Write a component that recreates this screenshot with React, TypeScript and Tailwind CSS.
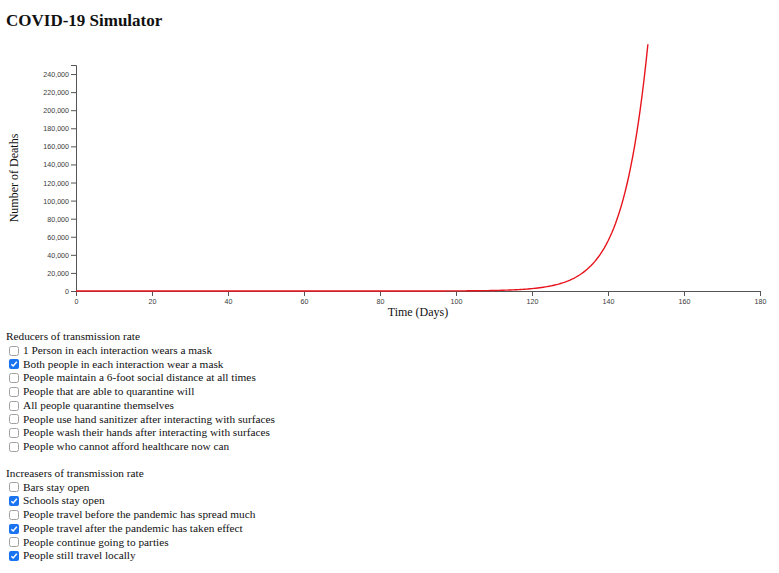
import React from "react";

const serif = { fontFamily: '"Liberation Serif", "Times New Roman", serif' };

// Chart geometry in page pixels (svg starts at page y = 32)
const TOP = 32;
const X0 = 76;
const X1 = 760;
const Y0 = 291 - TOP; // value 0
const Y1 = 65 - TOP; // value 250,000
const xs = (d: number) => X0 + ((X1 - X0) * d) / 180;
const ys = (v: number) => Y0 - ((Y0 - Y1) * v) / 250000;

const deaths = (t: number) => 273000 * Math.exp(0.152 * (t - 150.5));

function Chart() {
  const yTicks = Array.from({ length: 13 }, (_, i) => i * 20000);
  const xTicks = Array.from({ length: 10 }, (_, i) => i * 20);
  const pts: string[] = [];
  for (let t = 0; t <= 150.5; t += 0.5) {
    pts.push(`${xs(t).toFixed(2)},${ys(deaths(t)).toFixed(2)}`);
  }
  return (
    <svg width={779} height={292} className="block">
      {/* y axis */}
      <g fill="#3a3a3a" fontSize={7.1} fontFamily='"Liberation Sans", Arial, sans-serif'>
        <path d={`M${X0 - 5},${Y1 + 0.5}H${X0 + 0.5}V${Y0 + 0.5}H${X0 - 5}`} stroke="#555" fill="none" />
        {yTicks.map((v) => (
          <g key={v}>
            <line x1={X0 - 5} x2={X0} y1={ys(v) + 0.5} y2={ys(v) + 0.5} stroke="#555" />
            <text x={X0 - 7} y={ys(v) + 3} textAnchor="end">
              {v.toLocaleString("en-US")}
            </text>
          </g>
        ))}
      </g>
      {/* x axis */}
      <g fill="#3a3a3a" fontSize={7.1} fontFamily='"Liberation Sans", Arial, sans-serif'>
        <path d={`M${X0 + 0.5},${Y0 + 5}V${Y0 + 0.5}H${X1 + 0.5}V${Y0 + 5}`} stroke="#555" fill="none" />
        {xTicks.map((d) => (
          <g key={d}>
            <line x1={xs(d) + 0.5} x2={xs(d) + 0.5} y1={Y0} y2={Y0 + 5} stroke="#555" />
            <text x={xs(d) + 0.5} y={Y0 + 13} textAnchor="middle">
              {d}
            </text>
          </g>
        ))}
      </g>
      <polyline points={pts.join(" ")} fill="none" stroke="#e8141c" strokeWidth={1.4} />
      <text
        x={418}
        y={312 - TOP + 4}
        textAnchor="middle"
        fontSize={12}
        fill="#111"
        fontFamily='"Liberation Serif", "Times New Roman", serif'
      >
        Time (Days)
      </text>
      <text
        transform={`translate(18, ${178 - TOP}) rotate(-90)`}
        textAnchor="middle"
        fontSize={12}
        fill="#111"
        fontFamily='"Liberation Serif", "Times New Roman", serif'
      >
        Number of Deaths
      </text>
    </svg>
  );
}

function Check({ label, checked }: { label: string; checked?: boolean }) {
  return (
    <label className="flex h-[13.75px] items-center">
      {checked ? (
        <span className="ml-[9px] mr-[4px] flex h-[10px] w-[10px] items-center justify-center rounded-[2px] bg-[#1a73f0]">
          <svg width="8" height="8" viewBox="0 0 8 8">
            <path d="M1.3 4.2 L3.2 6 L6.8 1.8" stroke="#fff" strokeWidth="1.5" fill="none" />
          </svg>
        </span>
      ) : (
        <span className="ml-[9px] mr-[4px] h-[10px] w-[10px] rounded-[2.5px] border border-[#a0a0a0] bg-white" />
      )}
      <span>{label}</span>
    </label>
  );
}

const reducers: [string, boolean][] = [
  ["1 Person in each interaction wears a mask", false],
  ["Both people in each interaction wear a mask", true],
  ["People maintain a 6-foot social distance at all times", false],
  ["People that are able to quarantine will", false],
  ["All people quarantine themselves", false],
  ["People use hand sanitizer after interacting with surfaces", false],
  ["People wash their hands after interacting with surfaces", false],
  ["People who cannot afford healthcare now can", false],
];

const increasers: [string, boolean][] = [
  ["Bars stay open", false],
  ["Schools stay open", true],
  ["People travel before the pandemic has spread much", false],
  ["People travel after the pandemic has taken effect", true],
  ["People continue going to parties", false],
  ["People still travel locally", true],
];

export default function App() {
  return (
    <div className="h-[573px] w-[779px] overflow-hidden bg-white text-[#111]" style={serif}>
      <h1 className="ml-[6px] pt-[10px] text-[17px] font-bold leading-[22px]">COVID-19 Simulator</h1>
      <Chart />
      <div className="mt-[6px] text-[11.3px] leading-[13.75px]">
        <div className="ml-[6px]">Reducers of transmission rate</div>
        {reducers.map(([l, c]) => (
          <Check key={l} label={l} checked={c} />
        ))}
        <div className="h-[13px]" />
        <div className="ml-[6px]">Increasers of transmission rate</div>
        {increasers.map(([l, c]) => (
          <Check key={l} label={l} checked={c} />
        ))}
      </div>
    </div>
  );
}
